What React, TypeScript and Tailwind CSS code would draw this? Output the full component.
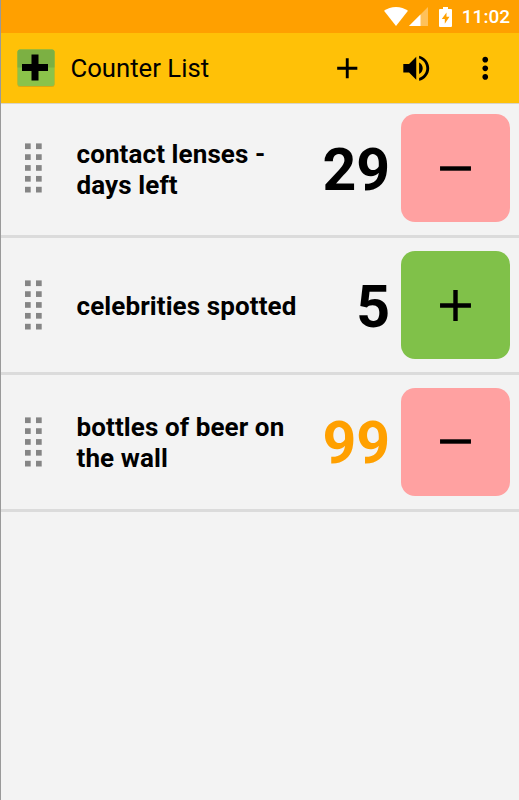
import { clsx } from "clsx";

interface Counter {
  label: string;
  value: number;
  step: "up" | "down";
  highlighted?: boolean;
}

const counters: Counter[] = [
  { label: "contact lenses - days left", value: 29, step: "down" },
  { label: "celebrities spotted", value: 5, step: "up" },
  { label: "bottles of beer on the wall", value: 99, step: "down", highlighted: true },
];

const PLUS = "M19 13h-6v6h-2v-6H5v-2h6V5h2v6h6v2z";
const MINUS = "M19 13H5v-2h14v2z";
const VOLUME =
  "M3 9v6h4l5 5V4L7 9H3zm13.5 3c0-1.77-1.02-3.29-2.5-4.03v8.05c1.48-.73 2.5-2.25 2.5-4.02zM14 3.23v2.06c2.89.86 5 3.54 5 6.71s-2.11 5.85-5 6.71v2.06c4.01-.91 7-4.49 7-8.77s-2.99-7.86-7-8.77z";
const MORE =
  "M12 8c1.1 0 2-.9 2-2s-.9-2-2-2-2 .9-2 2 .9 2 2 2zm0 2c-1.1 0-2 .9-2 2s.9 2 2 2 2-.9 2-2-.9-2-2-2zm0 6c-1.1 0-2 .9-2 2s.9 2 2 2 2-.9 2-2-.9-2-2-2z";

const Icon = ({ d, className }: { d: string; className: string }) => (
  <svg viewBox="0 0 24 24" fill="currentColor" className={className}>
    <path d={d} />
  </svg>
);

const StatusBar = () => (
  <div className="flex h-[33px] items-center justify-end bg-[#ffa000] pr-[9px] text-white">
    <svg viewBox="0 0 24 19" fill="currentColor" className="h-[19px] w-6">
      <path d="M12 19 0 3.8C3.4 1.3 7.5 0 12 0s8.6 1.3 12 3.8z" />
    </svg>
    <svg viewBox="0 0 19 19" fill="currentColor" className="ml-[1.5px] h-[19px] w-[19px]">
      <path d="M0 19 19 0v19z" opacity="0.35" />
      <path d="M0 19 11.5 7.5V19z" />
    </svg>
    <svg viewBox="0 0 13 20" fill="currentColor" className="ml-[11px] h-5 w-[13px]">
      <path
        fillRule="evenodd"
        d="M4 0h5v2h3q1 0 1 1v16q0 1-1 1H1q-1 0-1-1V3q0-1 1-1h3zM7.5 5.5 2.8 12h3v4.8l4.7-7h-3z"
      />
    </svg>
    <span className="ml-[9.5px] text-[19px] leading-none font-medium">11:02</span>
  </div>
);

const AppBar = () => (
  <header className="flex h-[71px] items-center border-b border-[#d9d4c8] bg-[#ffc107] pl-4">
    <svg viewBox="0 0 38 38" className="h-[38px] w-[38px]">
      <rect x="0.5" y="1" width="37" height="37" rx="2.5" fill="#c09a20" opacity="0.6" />
      <rect x="0.5" y="0.5" width="37" height="36.5" rx="2.5" fill="#8bc34a" />
      <path d="M0.5 18.5V3Q0.5 0.5 3 0.5h32q2.5 0 2.5 2.5v15.5z" fill="#7cb043" />
      <path d="M14.500 5.500h7v9.500h9.500v7h-9.500v9.500h-7V22H5v-7h9.500z" />
    </svg>
    <h1 className="ml-[15.5px] pt-[2px] text-[25.7px] leading-none">Counter List</h1>
    <div className="ml-auto flex gap-[34.7px] pr-[16.3px]">
      <Icon d={PLUS} className="h-[34.5px] w-[34.5px]" />
      <Icon d={VOLUME} className="h-[34.5px] w-[34.5px]" />
      <Icon d={MORE} className="h-[34.5px] w-[34.5px]" />
    </div>
  </header>
);

const DragHandle = () => (
  <svg viewBox="0 0 17 50" fill="#858585" className="h-[50px] w-[17px] shrink-0">
    {[0, 1, 2, 3, 4].map((row) => (
      <g key={row}>
        <rect x="0" y={0.4 + row * 10.85} width="5.7" height="5.7" />
        <rect x="11" y={0.4 + row * 10.85} width="5.7" height="5.7" />
      </g>
    ))}
  </svg>
);

const CounterRow = ({ label, value, step, highlighted }: Counter) => (
  <li className="flex h-[136.7px] items-center border-b-[3px] border-[#dbdbdb] pr-[9.5px] pl-6">
    <DragHandle />
    <span className="ml-[34.5px] w-[226px] shrink-0 pt-[3px] text-[26px] leading-[31px] font-bold tracking-[0.1px]">
      {label}
    </span>
    <span
      className={clsx(
        "flex-1 pt-[2px] text-right text-[59px] leading-none font-bold",
        highlighted && "text-[#ffa000]"
      )}
    >
      {value}
    </span>
    <button
      className={clsx(
        "ml-[11px] flex h-[108.3px] w-[108.3px] shrink-0 items-center justify-center rounded-[14px]",
        step === "up" ? "bg-[#80c149]" : "bg-[#ffa1a1]"
      )}
    >
      <Icon d={step === "up" ? PLUS : MINUS} className="h-[53px] w-[53px]" />
    </button>
  </li>
);

export default function App() {
  return (
    <div className="h-[800px] w-[519px] overflow-hidden border-l border-[#999] bg-[#f3f3f3] font-['Roboto',sans-serif] text-black">
      <StatusBar />
      <AppBar />
      <ul className="-mt-[2.5px]">
        {counters.map((counter) => (
          <CounterRow key={counter.label} {...counter} />
        ))}
      </ul>
    </div>
  );
}
